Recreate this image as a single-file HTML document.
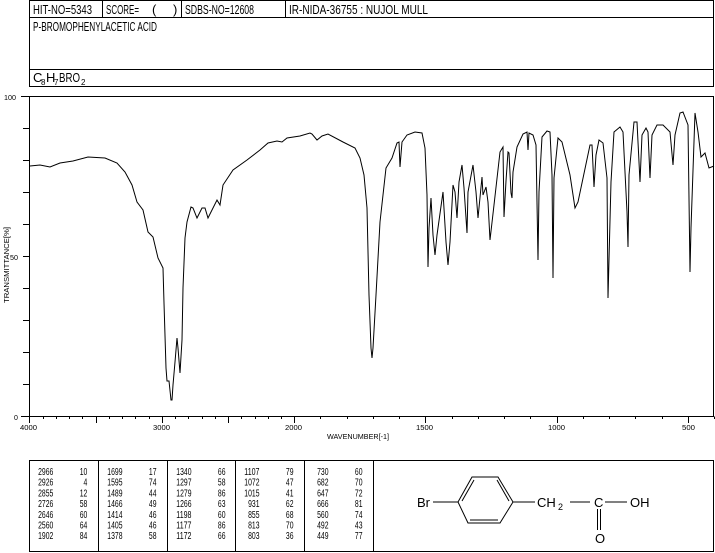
<!DOCTYPE html>
<html><head><meta charset="utf-8"><style>
html,body{margin:0;padding:0;background:#fff;}
svg{display:block;}
text{font-family:"Liberation Sans",sans-serif;fill:#000;}
</style></head><body>
<svg width="715" height="553" viewBox="0 0 715 553" xmlns="http://www.w3.org/2000/svg">
<g fill="none" stroke="#000" stroke-width="1">
<rect x="29.5" y="0.5" width="684" height="86"/>
<line x1="29.5" y1="17.5" x2="713.5" y2="17.5"/>
<line x1="29.5" y1="69.5" x2="713.5" y2="69.5"/>
<line x1="102.5" y1="0.5" x2="102.5" y2="17.5"/>
<line x1="181.5" y1="0.5" x2="181.5" y2="17.5"/>
<line x1="285.5" y1="0.5" x2="285.5" y2="17.5"/>
</g>
<g font-size="13">
<text x="33" y="14" textLength="59" lengthAdjust="spacingAndGlyphs">HIT-NO=5343</text>
<text x="106" y="14" textLength="33" lengthAdjust="spacingAndGlyphs">SCORE=</text>
<text x="152" y="14">(</text><text x="173" y="14">)</text>
<text x="185" y="14" textLength="69" lengthAdjust="spacingAndGlyphs">SDBS-NO=12608</text>
<text x="289" y="14" textLength="139" lengthAdjust="spacingAndGlyphs">IR-NIDA-36755 : NUJOL MULL</text>
<text x="33" y="31" textLength="124" lengthAdjust="spacingAndGlyphs">P-BROMOPHENYLACETIC ACID</text>
<text x="33" y="82">C</text><text x="41" y="85" font-size="8">8</text><text x="46" y="82">H</text><text x="54" y="85" font-size="8">7</text><text x="59" y="82" textLength="21" lengthAdjust="spacingAndGlyphs">BRO</text><text x="81" y="85" font-size="8">2</text>
</g>
<rect x="29.5" y="96.5" width="684" height="320" fill="none" stroke="#000"/>
<g stroke="#000" stroke-width="1">
<line x1="21" y1="96.5" x2="29.5" y2="96.5"/>
<line x1="23" y1="128.5" x2="29.5" y2="128.5"/>
<line x1="23" y1="160.5" x2="29.5" y2="160.5"/>
<line x1="23" y1="192.5" x2="29.5" y2="192.5"/>
<line x1="23" y1="224.5" x2="29.5" y2="224.5"/>
<line x1="23" y1="256.5" x2="29.5" y2="256.5"/>
<line x1="23" y1="288.5" x2="29.5" y2="288.5"/>
<line x1="23" y1="320.5" x2="29.5" y2="320.5"/>
<line x1="23" y1="352.5" x2="29.5" y2="352.5"/>
<line x1="23" y1="384.5" x2="29.5" y2="384.5"/>
<line x1="21" y1="416.5" x2="29.5" y2="416.5"/>
</g>
<g id="xt" stroke="#000"></g>
<g font-size="7">
<text x="4" y="100" textLength="12" lengthAdjust="spacingAndGlyphs">100</text>
<text x="10" y="260" textLength="8" lengthAdjust="spacingAndGlyphs">50</text>
<text x="14" y="420">0</text>
<text x="20" y="430" textLength="17" lengthAdjust="spacingAndGlyphs">4000</text>
<text x="153" y="430" textLength="17" lengthAdjust="spacingAndGlyphs">3000</text>
<text x="285" y="430" textLength="17" lengthAdjust="spacingAndGlyphs">2000</text>
<text x="416" y="430" textLength="17" lengthAdjust="spacingAndGlyphs">1500</text>
<text x="548" y="430" textLength="17" lengthAdjust="spacingAndGlyphs">1000</text>
<text x="682" y="430" textLength="13" lengthAdjust="spacingAndGlyphs">500</text>
<text x="327" y="439" textLength="62" lengthAdjust="spacingAndGlyphs">WAVENUMBER[-1]</text>
<text transform="translate(9,303) rotate(-90)" textLength="76" lengthAdjust="spacingAndGlyphs">TRANSMITTANCE[%]</text>
</g>
<polyline fill="none" stroke="#000" stroke-width="1" points="30,166 40,165 50,167 60,163 73,161 88,157 105,158 117,163 125,172 132,185 137,202 143,210 148,232 153,237 158,258 163,268 164,303 166,368 167,381 169,381 171,400 172,400 173,385 175,362 177,338 178,348 180,373 182,340 183,288 185,238 187,222 191,207 193,208 197,218 202,208 205,208 208,218 212,210 217,200 220,205 223,185 233,170 247,160 260,150 268,143 277,141 282,142 287,138 300,136 310,133 312,134 317,140 322,136 328,134 343,142 355,148 360,158 364,175 367,208 369,295 371,348 372,358 373,348 376,295 380,222 386,168 392,158 397,143 399,142 400,167 402,142 407,135 415,132 422,133 425,148 427,195 428,267 429,228 431,198 433,235 435,255 437,235 443,192 446,242 448,265 450,242 453,185 455,192 457,218 459,182 462,165 464,188 467,233 468,192 473,165 476,192 478,218 482,177 483,195 486,187 488,202 490,240 494,205 500,152 503,147 504,217 506,181 508,152 509,153 511,193 512,198 513,172 517,147 523,134 527,132 528,150 529,133 533,135 536,145 538,260 539,192 542,137 547,131 550,132 552,175 553,278 554,178 558,138 562,142 570,175 575,208 578,202 590,145 592,145 594,187 596,155 599,140 603,143 607,178 608,298 611,182 614,132 620,127 623,132 627,212 628,247 629,175 634,122 637,122 640,182 642,135 646,128 648,132 650,178 652,135 657,125 663,125 670,132 673,165 675,135 680,113 683,112 688,125 690,272 691,228 695,113 698,132 701,157 705,153 709,168 714,166"/>
<g fill="none" stroke="#000">
<rect x="29.5" y="460.5" width="684" height="91"/>
<line x1="98.5" y1="460.5" x2="98.5" y2="551.5"/>
<line x1="167.5" y1="460.5" x2="167.5" y2="551.5"/>
<line x1="235.5" y1="460.5" x2="235.5" y2="551.5"/>
<line x1="304.5" y1="460.5" x2="304.5" y2="551.5"/>
<line x1="373.5" y1="460.5" x2="373.5" y2="551.5"/>
</g>
<g id="tbl" font-size="10" text-anchor="end"></g>
<g fill="none" stroke="#000" stroke-width="1">
<line x1="433" y1="502" x2="458" y2="502"/>
<polygon points="458,502 472,477 498,477 513,502 500,523 468,523"/>
<line x1="462" y1="501" x2="474" y2="480"/>
<line x1="497" y1="480" x2="509" y2="501"/>
<line x1="470" y1="520" x2="498" y2="520"/>
<line x1="513" y1="502" x2="535" y2="502"/>
<line x1="570" y1="502" x2="590" y2="502"/>
<line x1="605" y1="502" x2="627" y2="502"/>
<line x1="597.5" y1="509" x2="597.5" y2="530"/>
<line x1="600.5" y1="509" x2="600.5" y2="530"/>
</g>
<g font-size="13">
<text x="417" y="507">Br</text>
<text x="537" y="507">CH</text><text x="558" y="510" font-size="9">2</text>
<text x="594" y="507">C</text>
<text x="630" y="507">OH</text>
<text x="595" y="543">O</text>
</g>
<script>
var ns="http://www.w3.org/2000/svg";
var g=document.getElementById("xt");
function L(x,y2){var l=document.createElementNS(ns,"line");l.setAttribute("x1",x);l.setAttribute("x2",x);l.setAttribute("y1",416.5);l.setAttribute("y2",y2);g.appendChild(l);}
for(var w=4000;w>=2000;w-=100){var x=Math.round(29.3+(4000-w)*0.1325)+0.5;L(x,w%500==0?423:419);}
for(var w=1900;w>=400;w-=100){var x=Math.round(294+(2000-w)*0.2625)+0.5;L(x,w%500==0?423:419);}
var d=[[["2966",10],["2926",4],["2855",12],["2726",58],["2646",60],["2560",64],["1902",84]],
[["1699",17],["1595",74],["1489",44],["1466",49],["1414",46],["1405",46],["1378",58]],
[["1340",66],["1297",58],["1279",86],["1266",63],["1198",60],["1177",86],["1172",66]],
[["1107",79],["1072",47],["1015",41],["931",62],["855",68],["813",70],["803",36]],
[["730",60],["682",70],["647",72],["666",81],["560",74],["492",43],["449",77]]];
var dv=[29.3,98.5,167.5,235.5,304.5];var t=document.getElementById("tbl");
for(var c=0;c<5;c++)for(var r=0;r<7;r++){var y=475+r*10.7;
var a=document.createElementNS(ns,"text");a.setAttribute("x",dv[c]+24);a.setAttribute("y",y);a.textContent=d[c][r][0];
a.setAttribute("textLength",d[c][r][0].length*3.8);a.setAttribute("lengthAdjust","spacingAndGlyphs");t.appendChild(a);
var b=document.createElementNS(ns,"text");b.setAttribute("x",dv[c]+58);b.setAttribute("y",y);b.textContent=d[c][r][1];
b.setAttribute("textLength",String(d[c][r][1]).length*3.8);b.setAttribute("lengthAdjust","spacingAndGlyphs");t.appendChild(b);}
</script>
</svg>
</body></html>
